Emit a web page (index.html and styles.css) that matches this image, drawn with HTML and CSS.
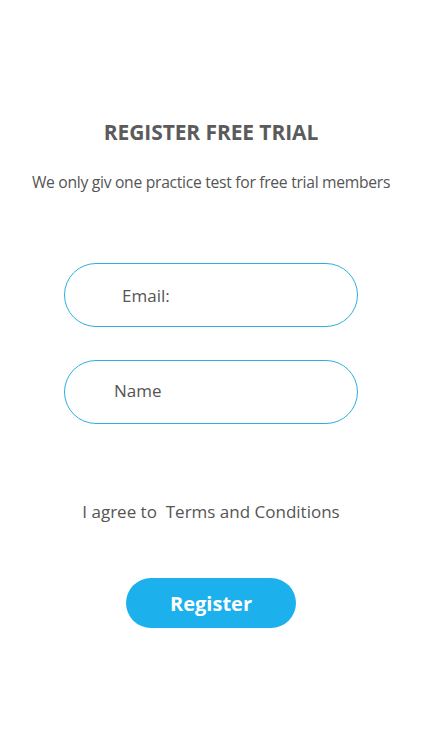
FILE: index.html
```html
<!DOCTYPE html>
<html lang="en">
<head>
  <meta charset="UTF-8" />
  <meta name="viewport" content="width=device-width, initial-scale=1.0"/>
  <title>Register Free Trial</title>
  <link rel="stylesheet" href="styles.css">
</head>
<body>
  <div class="page">
    <h1 class="title">REGISTER FREE TRIAL</h1>
    <p class="subtitle">We only giv one practice test for free trial members</p>

    <form class="form">
      <input type="email" class="field field-email" placeholder="Email:" />
      <input type="text" class="field field-name" placeholder="Name" />

      <p class="agree">I agree to&nbsp; Terms and Conditions</p>

      <button type="submit" class="btn">Register</button>
    </form>
  </div>
</body>
</html>
```

FILE: styles.css
```css
body {
  margin: 0;
  background: #fff;
  font-family: "Open Sans", "Noto Sans", Arial, sans-serif;
  color: #555;
}

.page {
  display: flex;
  flex-direction: column;
  align-items: center;
  padding-top: 118px;
}

.title {
  margin: 0;
  font-size: 21px;
  line-height: 28px;
  font-weight: 700;
  color: #5b5b5b;
  letter-spacing: -0.1px;
}

.subtitle {
  margin: 26px 0 0;
  font-size: 15.7px;
  line-height: 20px;
  color: #555;
  letter-spacing: -0.3px;
}

.form {
  display: flex;
  flex-direction: column;
  align-items: center;
  margin-top: 71px;
}

.field {
  box-sizing: border-box;
  width: 294px;
  height: 64px;
  border: 1.8px solid #2eaee3;
  border-radius: 32px;
  font-family: inherit;
  font-size: 17px;
  color: #555;
  outline: none;
  background: #fff;
}

.field::placeholder {
  color: #555;
}

.field-email {
  padding-left: 57px;
}

.field-name {
  margin-top: 33px;
  padding-left: 49px;
  padding-bottom: 4px;
}

.agree {
  margin: 76px 0 0;
  font-size: 17px;
  line-height: 24px;
  color: #555;
}

.btn {
  margin-top: 54px;
  width: 170px;
  height: 50px;
  border: none;
  border-radius: 25px;
  background: #1cb0ec;
  color: #fff;
  font-family: inherit;
  font-size: 20px;
  font-weight: 700;
  cursor: pointer;
}
```
